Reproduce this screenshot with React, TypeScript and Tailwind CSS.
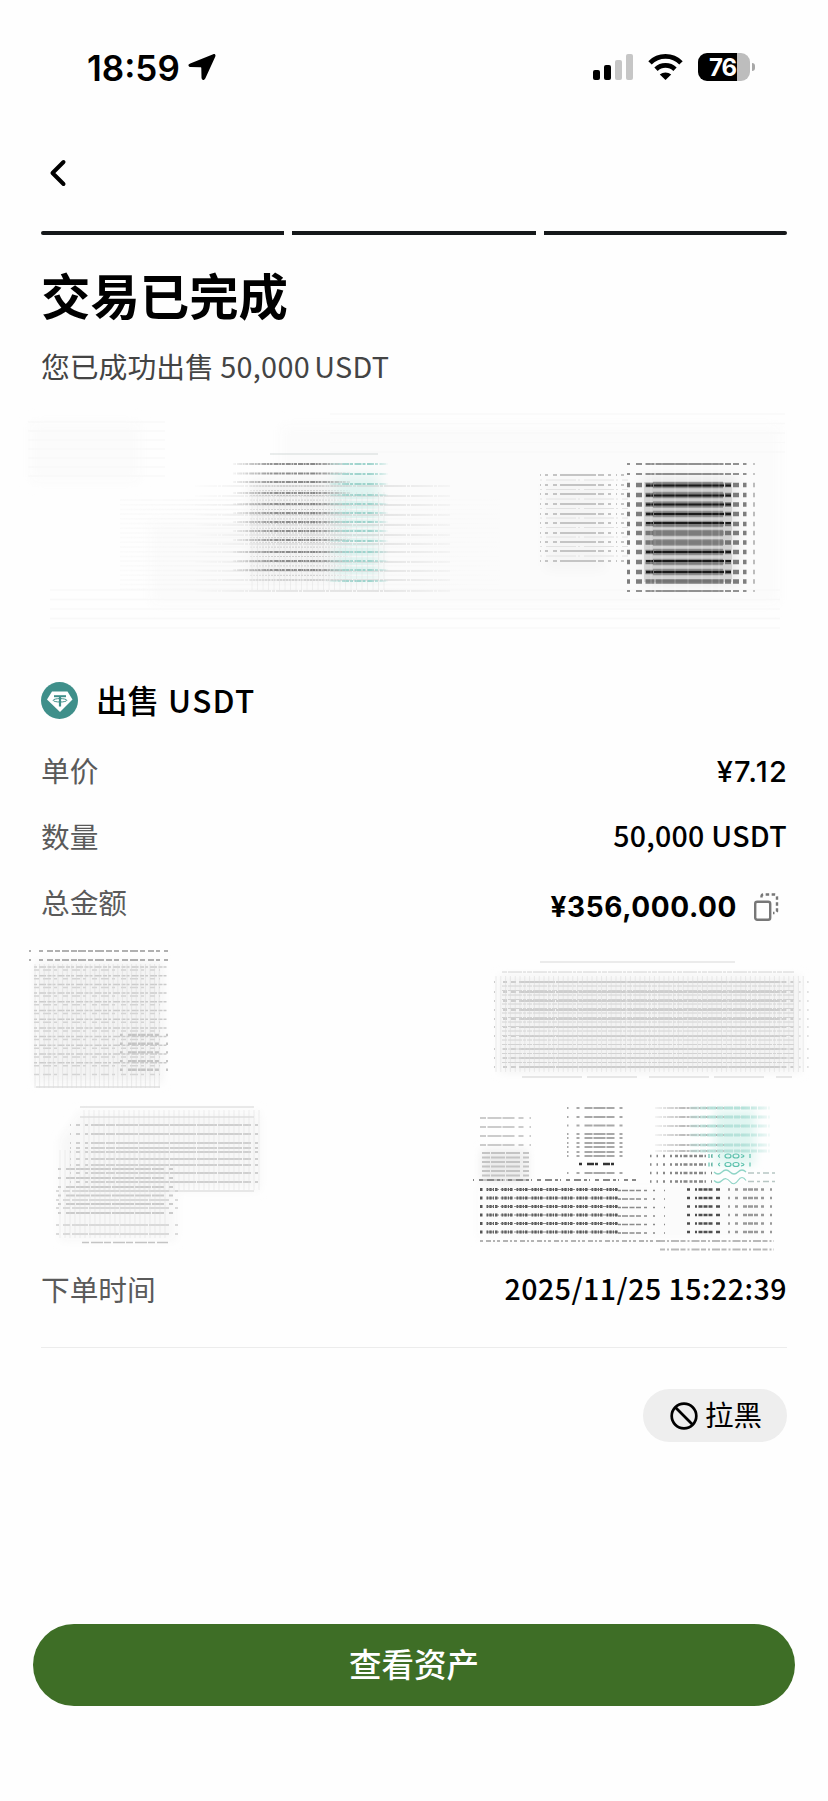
import type { ReactNode } from "react";

const cjk = "font-['Noto_Sans_CJK_SC',sans-serif]";

type Band = {
  x1: number;
  x2: number;
  rows: number[];
  stroke: string;
  width?: number;
  dash?: string;
  opacity?: number;
};

const Lines = ({ x1, x2, rows, stroke, width = 1.5, dash, opacity = 1 }: Band) => (
  <g stroke={stroke} strokeWidth={width} strokeDasharray={dash} opacity={opacity}>
    {rows.map((y) => (
      <path key={y} d={`M${x1} ${y}H${x2}`} />
    ))}
  </g>
);

const range = (from: number, to: number, step: number) => {
  const list: number[] = [];
  for (let y = from; y <= to; y += step) list.push(Math.round(y * 10) / 10);
  return list;
};

const Fade = ({ id, x1, x2, color }: { id: string; x1: number; x2: number; color: string }) => (
  <linearGradient id={id} gradientUnits="userSpaceOnUse" x1={x1} x2={x2} y1="0" y2="0">
    <stop offset="0" stopColor={color} stopOpacity="0" />
    <stop offset="0.35" stopColor={color} stopOpacity="0.9" />
    <stop offset="0.7" stopColor={color} />
    <stop offset="1" stopColor={color} stopOpacity="0.15" />
  </linearGradient>
);

const qrRows = [64, 74, 85, 95, 104.5, 114, 124, 133, 142.5, 152, 162, 172, 181.5, 191];

/* BLURRED COUNTERPARTY CARD */
const HiddenCard = () => (
  <svg className="block w-full h-[240px] shrink-0 blur-[0.5px]" viewBox="0 0 828 240" fill="none">
    <defs>
      <Fade id="cardGray" x1={230} x2={350} color="#888" />
      <Fade id="cardTeal" x1={325} x2={388} color="#9dd3cc" />
      <Fade id="cardWide" x1={190} x2={460} color="#cdcdcd" />
      <Fade id="cardTint" x1={30} x2={500} color="#f7f7f7" />
      <filter id="cardSoft" x="-20%" y="-20%" width="140%" height="140%">
        <feGaussianBlur stdDeviation="6" />
      </filter>
    </defs>
    <g filter="url(#cardSoft)">
      <path d="M30 22h110v60H30zM150 120h620v85H150zM280 25h500v180H280z" fill="#fbfbfb" />
      <rect x="250" y="80" width="130" height="100" fill="#f3f3f3" />
      <rect x="335" y="75" width="43" height="105" fill="#e0f4f1" />
      <rect x="545" y="80" width="60" height="90" fill="#f5f5f5" />
      <rect x="642" y="76" width="95" height="108" fill="#e9e9e9" />
    </g>
    <Lines x1={28} x2={165} rows={range(22, 80, 9)} stroke="#f9f9f9" />
    <Lines x1={50} x2={780} rows={range(190, 232, 9.5)} stroke="#f8f8f8" />
    <Lines x1={330} x2={785} rows={range(14, 60, 9.5)} stroke="#f9f9f9" />
    <Lines x1={120} x2={500} rows={range(100, 190, 4.7)} stroke="url(#cardTint)" />

    <Lines x1={270} x2={378} rows={[54]} stroke="#d3d9d8" width={1} />
    <Lines x1={195} x2={450} rows={[86, 96, 105, 115, 125, 135, 144, 152, 162, 171, 180, 191]} stroke="url(#cardWide)" width={1} dash="22 1 3 1" />
    <Lines x1={233} x2={350} rows={[64, 73.5, 82, 93, 104, 113, 122, 131, 140, 152, 161, 170]} stroke="url(#cardGray)" width={2} dash="3 1 5 0.6 2 0.6" />
    <Lines x1={250} x2={350} rows={range(86, 182, 4.7)} stroke="url(#cardGray)" width={1} dash="2 1" opacity={0.4} />
    <Lines x1={325} x2={388} rows={[64, 74, 84, 95, 104, 113, 122, 131, 141, 152, 161, 170, 181]} stroke="url(#cardTeal)" width={2} dash="3 1.5 7 1" />
    <g stroke="#d9d9d9" opacity="0.45">
      {range(252, 384, 5.5).map((x) => (
        <path key={x} d={`M${x} 92V190`} strokeWidth="0.8" />
      ))}
    </g>

    <Lines x1={540} x2={628} rows={[75, 85, 94, 104, 114, 123, 133, 142, 151, 161]} stroke="#c4c4c4" width={2} dash="1 4 3 5 4 3 36 2 6 4 3 5" />
    <Lines x1={540} x2={628} rows={range(80, 165, 9.5)} stroke="#e2e2e2" width={1} dash="2 4 30 2" />

    {/* dark block on the right */}
    <rect x="644" y="82" width="88" height="100" fill="#999" opacity="0.3" />
    <Lines x1={627} x2={757} rows={[64, 74, 191]} stroke="#777" width={2} dash="3 6 6 3.5 9 1 68 1.5 6 2 6 4 3.5 7 1 9" opacity={0.8} />
    <Lines x1={627} x2={757} rows={qrRows.slice(2, 13)} stroke="#555" width={4.6} dash="3 6 6 3.5 9 1 68 1.5 6 2 6 4 3.5 7 1 9" opacity={0.75} />
    <Lines x1={653} x2={723} rows={qrRows.slice(2, 12)} stroke="#808080" width={6.6} opacity={0.75} />
    <Lines x1={646} x2={731} rows={[85.5, 95.5, 104.5, 114, 123, 152, 161, 172]} stroke="#1a1a1a" width={2} dash="7 1 70 1.5 6" />
    <g stroke="#fff" opacity="0.4">
      {[651, 662, 675, 688, 702, 712, 719].map((x) => (
        <path key={x} d={`M${x} 62V193`} strokeWidth="0.7" />
      ))}
    </g>
  </svg>
);

/* BLURRED PAYMENT ROWS */
const HiddenRows = () => (
  <svg className="block w-full h-[320px] shrink-0 blur-[0.5px]" viewBox="0 0 828 320" fill="none">
    <defs>
      <filter id="rowSoft" x="-20%" y="-20%" width="140%" height="140%">
        <feGaussianBlur stdDeviation="5" />
      </filter>
      <Fade id="rowTeal" x1={680} x2={770} color="#b5e2da" />
      <Fade id="rowGray" x1={650} x2={745} color="#b5b5b5" />
    </defs>
    <g filter="url(#rowSoft)">
      <rect x="36" y="22" width="126" height="120" fill="#f3f3f3" />
      <path d="M80 172h180v78H176v50H60V200z" fill="#f7f7f7" />
      <rect x="500" y="36" width="300" height="96" fill="#f3f3f3" />
      <rect x="715" y="170" width="40" height="55" fill="#e0f5f1" />
      <rect x="482" y="210" width="45" height="32" fill="#ececec" />
      <rect x="478" y="245" width="290" height="55" fill="#fbfbfb" />
    </g>

    <Lines x1={29} x2={168} rows={[11, 20]} stroke="#b0b0b0" width={2} dash="2 8 4 4 6 2 5 2 7 2 6 1 8 2 5 2 9 2 6 2 5 3 6 2 8 2 5 3 6 2 4 4 4 9" />
    <Lines x1={34} x2={168} rows={range(27, 130, 8.7)} stroke="#cbcbcb" width={1.5} dash="3 2 7 1.5 4 1" />
    <Lines x1={34} x2={160} rows={range(30, 138, 8.7)} stroke="#d3d3d3" width={1.5} dash="5 4 8 3 3 6" />
    <Lines x1={120} x2={168} rows={range(95, 138, 8.7)} stroke="#c4c4c4" width={2.4} dash="3 5 9 1 8 1 6 2 4 7" />
    <Lines x1={36} x2={160} rows={[147]} stroke="#cdcdcd" width={1} />
    <g stroke="#dadada" opacity="0.7">
      {range(35, 160, 4.6).map((x) => (
        <path key={x} d={`M${x} 24V148`} strokeWidth="0.8" />
      ))}
    </g>

    <Lines x1={80} x2={254} rows={[167, 177, 251]} stroke="#d3d3d3" width={1} />
    <Lines x1={70} x2={262} rows={[185, 194, 203, 208, 212, 219, 225, 233, 242]} stroke="#cfcfcf" width={2} dash="1 5 4 5 3 3 14 1 9 1 22 1 30 1 26 1 20 1 24 1 8 4 3 7" />
    <Lines x1={58} x2={178} rows={[229, 238, 247, 255.5, 264, 273]} stroke="#cbcbcb" width={2} dash="3 5 9 1 14 1 20 1 22 1 16 1 12 5 4 6" />
    <Lines x1={56} x2={178} rows={[251, 260, 268, 285, 294]} stroke="#d0d0d0" width={1.5} dash="3 4 7 2 16 1 30 1 28 1 20 6 3 4" />
    <Lines x1={82} x2={168} rows={[302.5]} stroke="#c4c4c4" width={1.5} dash="7 2 12 1" />
    <g stroke="#dedede" opacity="0.65">
      {range(60, 168, 5).map((x) => (
        <path key={x} d={`M${x} 210V298`} strokeWidth="0.8" />
      ))}
      {range(84, 260, 5).map((x) => (
        <path key={x} d={`M${x} 170V250`} strokeWidth="0.8" />
      ))}
    </g>

    <Lines x1={540} x2={735} rows={[22]} stroke="#d8d8d8" width={1} />
    <Lines x1={494} x2={810} rows={[42, 52, 61, 70, 79, 87, 96, 109, 118, 127]} stroke="#cdcdcd" width={2} dash="1 8 4 4 5 3 36 1 22 0.6 48 0.6 60 0.6 40 0.6 52 1 5 4 3 6 1 7" />
    <Lines x1={502} x2={794} rows={[32, ...range(46, 124, 4.5)]} stroke="#d2d2d2" width={1} dash="5 1 14 1 3 1" />
    <Lines x1={522} x2={792} rows={[137]} stroke="#cfcfcf" width={1} dash="60 5 50 12" />
    <g stroke="#d9d9d9" opacity="0.65">
      {range(496, 804, 4.8).map((x) => (
        <path key={x} d={`M${x} 36V132`} strokeWidth="0.8" />
      ))}
    </g>

    <Lines x1={480} x2={531} rows={[178, 187, 196, 205]} stroke="#bcbcbc" width={1.6} dash="6 1.5 14 1 12 4 5 6" />
    <Lines x1={482} x2={531} rows={range(213, 240, 4.5)} stroke="#c4c4c4" width={2} dash="8 1 14 1 14 3 6 2" />
    <Lines x1={567} x2={624} rows={[168, 177, 185.5, 194, 198, 203, 207, 212, 216, 233]} stroke="#a8a8a8" width={2} dash="1.5 8 3 5 8 1 12 1 8 5 3 2" />
    <Lines x1={579} x2={615} rows={[224]} stroke="#333" width={2.4} dash="3 5 7 1" />
    <Lines x1={655} x2={745} rows={[168, 177, 186, 195, 205, 211]} stroke="url(#rowGray)" width={1.8} dash="7 1 3 0.8" />
    <Lines x1={690} x2={770} rows={[168, 177, 186, 195, 205, 211]} stroke="url(#rowTeal)" width={3} dash="9 1 6 1" />
    <Lines x1={650} x2={712} rows={[216, 224.5, 233, 241.5]} stroke="#888" width={2.6} dash="1.5 5 1.5 5 2 5 2 3 3 2 2 1.5 4 2 3 1.5 3 2 4 1.5" />
    <g stroke="#5fc2ae" strokeWidth="1.2">
      {[216, 224.5].map((y) => (
        <path key={y} d={`M709 ${y - 2}v4M712 ${y - 2}v4M720 ${y - 1.5}q-3 1.5 0 3M725 ${y}a3 2 0 1 0 6 0 3 2 0 1 0-6 0M733 ${y}a3 2 0 1 0 6 0 3 2 0 1 0-6 0M741 ${y - 1.5}q6 1.5 0 3M750 ${y - 2}v4`} />
      ))}
      <path d="M714 232q4 4 8 0t8 0 8 0 8 0M714 240.5q4 4 8 0t8 1 8-1 8 0" opacity="0.7" />
    </g>
    <Lines x1={748} x2={775} rows={[233, 241.5]} stroke="#b7c6c3" width={1.6} dash="6 3 3 3" />

    <Lines x1={473} x2={636} rows={[240]} stroke="#888" width={2} dash="1 5 4 4 7 3 3 2" />
    <Lines x1={480} x2={618} rows={[249.5, 258, 266.5, 275, 283.5, 292]} stroke="#555" width={3.2} dash="2.5 4 1.8 1 2.4 1.1 1.2 1" />
    <Lines x1={487} x2={618} rows={[249.5, 258, 266.5, 275, 283.5, 292]} stroke="#777" width={0.8} dash="7 1 4 1.5" />
    <Lines x1={618} x2={665} rows={[250.5, 259, 267.5, 276, 284.5, 293]} stroke="#8a8a8a" width={1.6} dash="3 1 6 1.5 5 1.5 5 3 3 6 2 9" />
    <Lines x1={687} x2={724} rows={[249.5, 258, 266.5, 275, 283.5, 292]} stroke="#4f4f4f" width={2.6} dash="3 5 2 1.5 4 1 4 1 4 3.5 4 5" />
    <Lines x1={728} x2={773} rows={[249.5, 258, 266.5, 275, 283.5, 292]} stroke="#999" width={2.4} dash="2 5 3 5 4 1 5 1 4 3 3 6" />
    <Lines x1={480} x2={660} rows={[301]} stroke="#b3b3b3" width={1.8} dash="3 3 5 2 2 2" />
    <Lines x1={660} x2={774} rows={[301, 309.5]} stroke="#b9b9b9" width={1.8} dash="5 2 2 2 8 1.5" />
  </svg>
);

const StatusBar = () => (
  <div className="flex items-center justify-between h-[134px] pl-[87px] pr-[73px]">
    <div className="flex items-center gap-2">
      <span className="font-['Inter',sans-serif] font-semibold text-[35px] leading-10 pt-px">18:59</span>
      <svg className="w-7 h-7" viewBox="0 0 28 28" fill="#000">
        <path d="M25.2 1.2 2.2 10.6c-2.6 1.1-2.1 3.3.6 3.4l9.6.3c.7 0 .9.2.9.9l.2 9.4c.1 2.8 2.6 3.2 3.9.6L27.1 4c1-2.1-.1-3.5-1.9-2.8z" />
      </svg>
    </div>
    <div className="flex items-center">
      <svg className="w-10 h-[26px]" viewBox="0 0 40 26">
        <rect x="0" y="16" width="7" height="10" rx="2" />
        <rect x="11" y="11" width="7" height="15" rx="2" />
        <rect x="22" y="6" width="7" height="20" rx="2" fill="#c6c6c6" />
        <rect x="33" y="0" width="7" height="26" rx="2" fill="#c6c6c6" />
      </svg>
      <svg className="w-[35px] h-[26px] ml-[15px]" viewBox="0 0 35 26" fill="none" stroke="#000" strokeWidth="4.8">
        <path d="M2 8.9C10.5 .3 24.5 .3 33 8.9" />
        <path d="M8 15.2c5.3-5 13.7-5 19 0" />
        <path d="M17.5 26l-5.700-5.600c3.200-2.700 8.200-2.700 11.400 0z" fill="#000" stroke="none" />
      </svg>
      <div className="flex items-center ml-[15px]">
        <div className="flex items-center h-7 w-[52px] rounded-[9px] bg-[linear-gradient(90deg,#000_39px,#bdbdbd_39px)]">
          <span className="pl-[11px] pt-px font-['Inter',sans-serif] font-bold text-[24px] leading-7 tracking-[-1px] text-white">76</span>
        </div>
        <div className="ml-[2px] w-[3px] h-2 rounded-r-full bg-[#a8a8a8]" />
      </div>
    </div>
  </div>
);

const Row = ({ label, children }: { label: string; children: ReactNode }) => (
  <div className="flex items-center justify-between h-[66px]">
    <span className="pb-px text-[28.7px] text-[#5a5a5a]">{label}</span>
    {children}
  </div>
);

const App = () => {
  return (
    <div className={`${cjk} w-full h-[1801px] bg-[#fefefe] text-black flex flex-col`}>
      <StatusBar />

      {/* BACK */}
      <div className="h-[97px] pl-[49px] pt-[25px]">
        <svg className="w-[18px] h-7" viewBox="0 0 18 28" fill="none" stroke="#000" strokeWidth="4" strokeLinecap="round" strokeLinejoin="round">
          <path d="M14.5 3 3.5 14l11 11" />
        </svg>
      </div>

      {/* STEPS */}
      <div className="flex gap-2 px-[41px]">
        <div className="flex-1 h-1 rounded-l-full bg-[#15181a]" />
        <div className="flex-1 h-1 bg-[#15181a]" />
        <div className="flex-1 h-1 rounded-r-full bg-[#15181a]" />
      </div>

      <div className="px-[41px] h-[165px]">
        <h1 className="pt-[29px] text-[49.4px] leading-[60px] font-bold">交易已完成</h1>
        <p className="pt-[22px] text-[28.8px] leading-[40px] text-[#444]">
          您已成功出售 <span className="tracking-[0.3px] [word-spacing:-2.5px]">50,000 USDT</span>
        </p>
      </div>

      <HiddenCard />

      {/* ORDER INFO */}
      <div className="px-[41px] h-[300px]">
        <div className="flex items-center gap-[18px] h-[97px] pt-[23px]">
          <svg className="w-[37px] h-[37px]" viewBox="0 0 37 37">
            <circle cx="18.5" cy="18.5" r="18.5" fill="#3f8f8a" />
            <path d="M11 9.5h15.5l5 8L19 30 6 17.5z" fill="#fff" />
            <g stroke="#3f8f8a" fill="none">
              <path d="M13 14.2h12" strokeWidth="2" />
              <path d="M19 14v10.5" strokeWidth="2.2" />
              <ellipse cx="19" cy="18.3" rx="6.8" ry="1.7" strokeWidth="1" />
            </g>
          </svg>
          <h2 className="pb-[3px] text-[31.5px] leading-[40px] font-medium">
            出售 <span className="ml-[2px] tracking-[1.3px]">USDT</span>
          </h2>
        </div>
        <Row label="单价">
          <span className="pt-[3px] font-['Inter',sans-serif] text-[29px] font-medium tracking-[1.2px] -mr-px">¥7.12</span>
        </Row>
        <Row label="数量">
          <span className="pb-[2px] text-[28.5px] font-medium tracking-[0.3px]">50,000 USDT</span>
        </Row>
        <Row label="总金额">
          <div className="flex items-center gap-4 pr-2 pt-[9px]">
            <span className="font-['Inter',sans-serif] text-[28px] font-bold tracking-[0.6px]">¥356,000.00</span>
            <svg className="w-[26px] h-7" viewBox="0 0 26 28" fill="none" stroke="#777" strokeWidth="2.4">
              <rect x="2.2" y="8.7" width="15" height="18" rx="2" />
              <path d="M8.5 4.5V3.5a2 2 0 0 1 2-2H22a2 2 0 0 1 2 2V18a2 2 0 0 1-2 2h-2" strokeDasharray="3.5 2.5" />
            </svg>
          </div>
        </Row>
      </div>

      <HiddenRows />

      <div className="px-[41px]">
        <div className="flex items-center justify-between h-[58px]">
          <span className="pb-px text-[28.7px] text-[#5a5a5a]">下单时间</span>
          <span className="pb-[2px] text-[28.5px] font-medium tracking-[0.5px]">2025/11/25 15:22:39</span>
        </div>
        <div className="mt-[29px] h-px bg-[#ececec]" />
        <div className="flex justify-end mt-[41px]">
          <button className="flex items-center gap-[7px] h-[53px] w-[144px] pl-[27px] rounded-full bg-[#eee]">
            <svg className="w-7 h-7" viewBox="0 0 28 28" fill="none" stroke="#000" strokeWidth="2.7">
              <circle cx="14" cy="14" r="12.3" />
              <path d="M5.3 5.3l17.4 17.4" />
            </svg>
            <span className="pb-[3px] text-[28.5px] leading-[40px] whitespace-nowrap">拉黑</span>
          </button>
        </div>
      </div>

      <button className="mt-[182px] mx-[33px] h-[82px] pb-[3px] shrink-0 rounded-full bg-[#3e6e26] text-white text-[32.5px] font-medium">
        查看资产
      </button>
    </div>
  );
};

export default App;
